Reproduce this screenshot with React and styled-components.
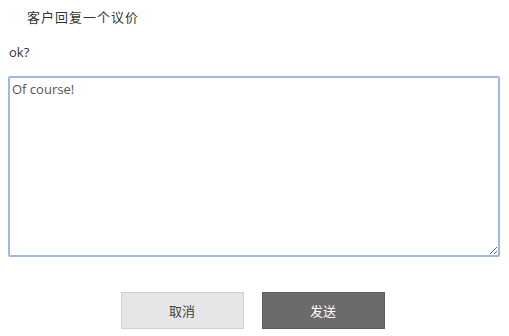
import React, { useState } from 'react'
import styled, { createGlobalStyle } from 'styled-components'

const GlobalStyle = createGlobalStyle`
  body {
    margin: 0;
    background: #fff;
    font-family: "Open Sans", "Noto Sans CJK SC", sans-serif;
    color: #333;
  }
`

const Container = styled.div`
  width: 509px;
  height: 336px;
  box-sizing: border-box;
  padding: 8px 8px 0 8px;
  display: flex;
  flex-direction: column;
`

const Title = styled.h3`
  margin: 0 0 0 19px;
  font-family: "Noto Sans CJK SC", sans-serif;
  font-size: 13px;
  letter-spacing: 1px;
  font-weight: normal;
  line-height: 18px;
  color: #333;
`

const Question = styled.p`
  margin: 17px 0 0 1px;
  font-size: 13px;
  line-height: 18px;
  color: #333;
`

const Reply = styled.textarea`
  margin-top: 15px;
  width: 492px;
  height: 181px;
  box-sizing: border-box;
  border: 2px solid #9eb7ee;
  border-radius: 2px;
  padding: 2px 2px;
  font-family: "Open Sans", "Noto Sans CJK SC", sans-serif;
  font-size: 13px;
  color: #555;
  outline: none;
`

const Actions = styled.div`
  display: flex;
  justify-content: center;
  gap: 18px;
  margin: 35px 4px 0 0;
`

const Button = styled.button`
  width: 123px;
  height: 37px;
  border: 1px solid ${p => (p.$primary ? '#5e5e5e' : '#d0d0d0')};
  background: ${p => (p.$primary ? '#6b6b6b' : '#e6e6e6')};
  color: ${p => (p.$primary ? '#fff' : '#444')};
  font-family: "Noto Sans CJK SC", sans-serif;
  font-size: 13px;
  cursor: pointer;
`

const App = () => {
  const [text, setText] = useState('Of course!')
  return (
    <Container>
      <GlobalStyle />
      <Title>客户回复一个议价</Title>
      <Question>ok?</Question>
      <Reply value={text} onChange={e => setText(e.target.value)} />
      <Actions>
        <Button>取消</Button>
        <Button $primary>发送</Button>
      </Actions>
    </Container>
  )
}

export default App
